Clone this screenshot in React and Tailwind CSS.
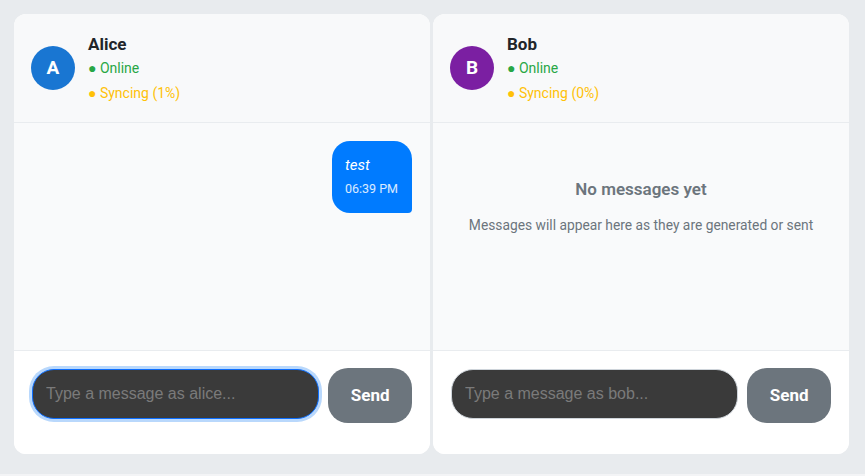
import React, { useState } from 'react';

const users = [
  {
    id: 'alice',
    name: 'Alice',
    initial: 'A',
    color: 'bg-[#1976d2]',
    sync: 1,
    messages: [{ text: 'test', time: '06:39 PM' }],
    focused: true
  },
  {
    id: 'bob',
    name: 'Bob',
    initial: 'B',
    color: 'bg-[#7b1fa2]',
    sync: 0,
    messages: [],
    focused: false
  }
];

const ChatPanel = ({ user }) => {
  const [draft, setDraft] = useState('');

  return (
    <div className="w-[416px] h-[440px] flex flex-col rounded-xl overflow-hidden bg-white">
      <div className="h-[109px] shrink-0 flex items-center gap-[13px] pl-[17px] bg-[#f8f9fa] border-b border-[#e9ecef]">
        <div className={`w-[44px] h-[44px] rounded-full ${user.color} flex items-center justify-center text-white text-[19px] font-bold`}>
          {user.initial}
        </div>
        <div className="flex flex-col">
          <div className="text-[17px] leading-[22px] font-bold text-[#212529]">{user.name}</div>
          <div className="text-[14px] leading-[20px] mt-[3px] text-[#28a745]">● Online</div>
          <div className="text-[14px] leading-[20px] mt-[5px] text-[#ffc107]">● Syncing ({user.sync}%)</div>
        </div>
      </div>

      <div className="flex-1 bg-[#f9fafb] px-[18px] pt-[18px] border-b border-[#e9ecef]">
        {user.messages.length === 0 ? (
          <div className="mt-[37px] flex flex-col items-center text-[#6c757d]">
            <div className="text-[17px] leading-[22px] font-semibold">No messages yet</div>
            <div className="text-[13.8px] leading-[20px] mt-[15px]">Messages will appear here as they are generated or sent</div>
          </div>
        ) : (
          user.messages.map((m, idx) => (
            <div key={idx} className="flex justify-end">
              <div className="w-[80px] h-[72px] bg-[#007bff] text-white rounded-[18px] rounded-br-[4px] px-[13px] pt-[13px]">
                <div className="text-[15px] leading-[22px] italic">{m.text}</div>
                <div className="text-[12.5px] leading-[16px] mt-[5px] text-white/85">{m.time}</div>
              </div>
            </div>
          ))
        )}
      </div>

      <div className="h-[103px] shrink-0 flex items-start gap-[9px] px-[18px] pt-[17px] bg-white">
        <input
          autoFocus={user.focused}
          value={draft}
          onChange={(e) => setDraft(e.target.value)}
          placeholder={`Type a message as ${user.id}...`}
          className={`w-[288px] h-[50px] mt-[1px] rounded-[22px] bg-[#3a3a3a] px-[13px] text-[16px] text-white placeholder:text-[#7a7a7a] outline-none border ${user.focused ? 'border-[#0d6efd] ring-[3px] ring-[#b9d8fc]' : 'border-[#ced4da]'}`}
          style={{ fontFamily: '"Liberation Sans", Arial, sans-serif' }}
        />
        <button className="w-[84px] h-[55px] rounded-[20px] bg-[#6c757d] text-white text-[17px] font-bold">
          Send
        </button>
      </div>
    </div>
  );
};

const App = () => {
  return (
    <div className="min-h-screen bg-[#f3f4f6]" style={{ fontFamily: 'Roboto, "Noto Sans", sans-serif' }}>
      <div className="h-[474px] bg-[#e8ebee] p-[14px] flex gap-[3px]">
        {users.map((u) => (
          <ChatPanel key={u.id} user={u} />
        ))}
      </div>
    </div>
  );
};

export default App;
